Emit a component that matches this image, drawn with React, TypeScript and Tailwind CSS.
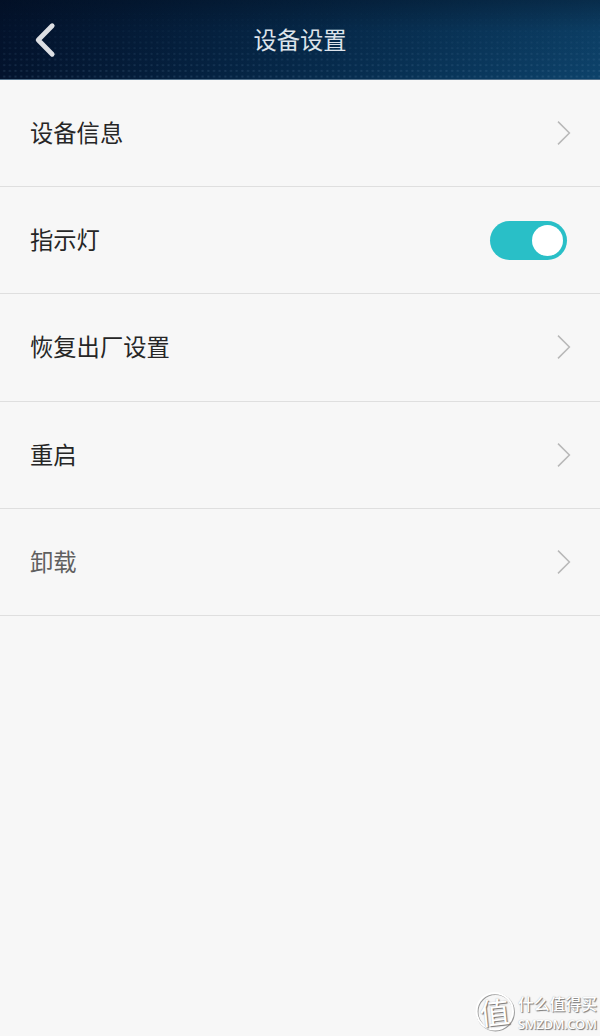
import React from 'react';

type Row = { label: string; kind: 'link' | 'switch'; height: string; tone: string };

const rows: Row[] = [
  { label: '设备信息', kind: 'link', height: 'h-[107px]', tone: 'text-[#262626]' },
  { label: '指示灯', kind: 'switch', height: 'h-[107px]', tone: 'text-[#262626]' },
  { label: '恢复出厂设置', kind: 'link', height: 'h-[108px] pb-px', tone: 'text-[#262626]' },
  { label: '重启', kind: 'link', height: 'h-[107px]', tone: 'text-[#262626]' },
  { label: '卸载', kind: 'link', height: 'h-[107px]', tone: 'text-[#606060]' },
];

function Chevron() {
  return (
    <svg className="mr-[29px] h-6 w-[14px]" viewBox="0 0 14 24" fill="none" stroke="#b8b8b8" strokeWidth="1.5">
      <path d="M1 .6 12.4 12 1 23.4" />
    </svg>
  );
}

function Toggle() {
  return (
    <button
      role="switch"
      aria-checked="true"
      className="mr-[33px] flex h-[39px] w-[77px] items-center justify-end rounded-full bg-[#29bfc7] pr-1"
    >
      <span className="h-[31px] w-[31px] rounded-full bg-white" />
    </button>
  );
}

function Header() {
  return (
    <header className="relative flex h-20 items-center justify-center border-b border-[#54728c] bg-linear-to-r from-[#03132d] via-[#06294a] to-[#0d426a]">
      <svg className="absolute inset-0 h-full w-full" aria-hidden="true">
        <defs>
          <pattern id="dots" width="5.67" height="5.67" patternUnits="userSpaceOnUse">
            <rect x="3.2" y="1.8" width="2" height="2" fill="#7fa6c8" />
          </pattern>
          <linearGradient id="fade" x1="0" y1="0" x2="0" y2="1">
            <stop offset="0" stopColor="#fff" stopOpacity="0" />
            <stop offset=".4" stopColor="#fff" stopOpacity=".05" />
            <stop offset="1" stopColor="#fff" stopOpacity=".18" />
          </linearGradient>
          <mask id="dotMask">
            <rect width="100%" height="100%" fill="url(#fade)" />
          </mask>
          <linearGradient id="shade" x1="0" y1="0" x2="0" y2="1">
            <stop offset="0" stopColor="#020c1c" stopOpacity=".4" />
            <stop offset=".4" stopColor="#020c1c" stopOpacity=".08" />
            <stop offset="1" stopColor="#020c1c" stopOpacity="0" />
          </linearGradient>
        </defs>
        <rect width="100%" height="100%" fill="url(#shade)" />
        <rect width="100%" height="100%" fill="url(#dots)" mask="url(#dotMask)" />
      </svg>
      <button aria-label="返回" className="absolute top-[22px] left-[34px]">
        <svg
          className="block h-9 w-[22px]"
          viewBox="0 0 22 36"
          fill="none"
          stroke="#dddfe3"
          strokeWidth="4.8"
          strokeLinecap="round"
          strokeLinejoin="round"
        >
          <path d="M18.2 3.8 4.2 18 18.2 32.2" />
        </svg>
      </button>
      <h1 className="relative pb-[2px] text-[23.3px] leading-8 text-[#dde3ea]">设备设置</h1>
    </header>
  );
}

function Watermark() {
  return (
    <div className="absolute right-[2px] bottom-0 flex h-11 items-start gap-[3px] text-white">
      <div className="relative h-10 w-10">
        <svg className="absolute inset-0 h-10 w-10 overflow-visible" viewBox="0 0 40 40" fill="none">
          <circle cx="20.6" cy="20.2" r="18.2" stroke="#999" strokeWidth="2.2" />
          <circle cx="19.8" cy="19.4" r="18.2" stroke="#fff" strokeWidth="2" />
        </svg>
        <span className="absolute inset-0 flex -rotate-6 items-center justify-center pr-px pb-[2px] text-[30px] leading-none [text-shadow:1px_1px_1px_#777,0_0_1px_#aaa]">
          值
        </span>
      </div>
      <div className="w-[80px] pt-[1px] whitespace-nowrap [text-shadow:1px_1px_1px_#777,0_0_1px_#aaa]">
        <p className="text-[15.8px] leading-[21px] font-medium">什么值得买</p>
        <p className="font-['Open_Sans',sans-serif] text-[13px] leading-[20px] font-semibold tracking-[-0.4px]">SMZDM.COM</p>
      </div>
    </div>
  );
}

export default function App() {
  return (
    <div className="relative h-[1036px] w-[600px] overflow-hidden bg-[#f7f7f7] font-['AR_PL_UKai_CN','KaiTi','Noto_Sans_CJK_SC',sans-serif]">
      <Header />
      <main>
        {rows.map((row) => (
          <div
            key={row.label}
            className={`flex items-center justify-between border-b border-[#dfdfdf] pl-[30px] ${row.height}`}
          >
            <span className={`pb-[2px] text-[23.3px] leading-8 ${row.tone}`}>{row.label}</span>
            {row.kind === 'switch' ? <Toggle /> : <Chevron />}
          </div>
        ))}
      </main>
      <Watermark />
    </div>
  );
}
